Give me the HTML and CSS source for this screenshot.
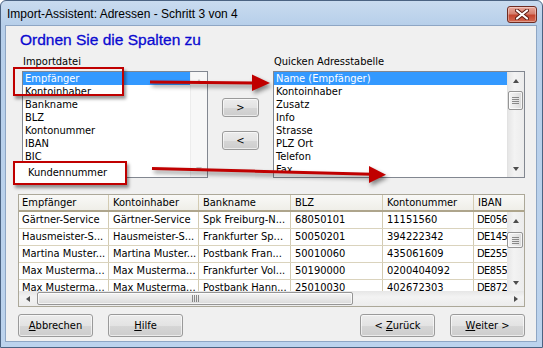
FILE: index.html
```html
<!DOCTYPE html>
<html lang="de">
<head>
<meta charset="utf-8">
<title>Import-Assistent</title>
<link rel="stylesheet" href="styles.css">
</head>
<body>
<div class="window">
  <div class="titlebar">
    <span class="title">Import-Assistent: Adressen - Schritt 3 von 4</span>
    <span class="close">
      <svg width="14" height="11" viewBox="0 0 14 11"><path d="M2 1.5 L12 9.5 M12 1.5 L2 9.5" stroke="#5a1a12" stroke-width="4" stroke-linecap="round"/><path d="M2 1.5 L12 9.5 M12 1.5 L2 9.5" stroke="#ffffff" stroke-width="2.2" stroke-linecap="round"/></svg>
    </span>
  </div>
  <div class="client">
    <h1 class="heading">Ordnen Sie die Spalten zu</h1>
    <div class="mapping">
      <div class="col col-left">
        <div class="label">Importdatei</div>
        <div class="listbox">
          <ul class="items">
            <li class="sel">Empfänger</li>
            <li>Kontoinhaber</li>
            <li>Bankname</li>
            <li>BLZ</li>
            <li>Kontonummer</li>
            <li>IBAN</li>
            <li>BIC</li>
          </ul>
          <div class="vscroll disabled">
            <div class="arrow"><span class="tri up"></span></div>
            <div class="track"></div>
            <div class="arrow"><span class="tri down"></span></div>
          </div>
        </div>
      </div>
      <div class="col col-mid">
        <span class="btn small">&gt;</span>
        <span class="btn small">&lt;</span>
      </div>
      <div class="col col-right">
        <div class="label">Quicken Adresstabelle</div>
        <div class="listbox">
          <ul class="items">
            <li class="sel">Name (Empfänger)</li>
            <li>Kontoinhaber</li>
            <li>Zusatz</li>
            <li>Info</li>
            <li>Strasse</li>
            <li>PLZ Ort</li>
            <li>Telefon</li>
            <li>Fax</li>
          </ul>
          <div class="vscroll">
            <div class="arrow"><span class="tri up"></span></div>
            <div class="track"><div class="thumb thumb-list"><span class="grip-v"></span></div></div>
            <div class="arrow"><span class="tri down"></span></div>
          </div>
        </div>
      </div>
    </div>

    <div class="grid">
      <div class="ghead">
        <div class="cell c1">Empfänger</div>
        <div class="cell c2">Kontoinhaber</div>
        <div class="cell c3">Bankname</div>
        <div class="cell c4">BLZ</div>
        <div class="cell c5">Kontonummer</div>
        <div class="cell c6">IBAN</div>
      </div>
      <div class="gbody">
        <div class="rows">
          <div class="row"><div class="cell c1">Gärtner-Service</div><div class="cell c2">Gärtner-Service</div><div class="cell c3">Spk Freiburg-N...</div><div class="cell c4">68050101</div><div class="cell c5">11151560</div><div class="cell c6">DE056</div></div>
          <div class="row"><div class="cell c1">Hausmeister-S...</div><div class="cell c2">Hausmeister-S...</div><div class="cell c3">Frankfurter Sp...</div><div class="cell c4">50050201</div><div class="cell c5">394222342</div><div class="cell c6">DE145</div></div>
          <div class="row"><div class="cell c1">Martina Muster...</div><div class="cell c2">Martina Muster...</div><div class="cell c3">Postbank Fran...</div><div class="cell c4">50010060</div><div class="cell c5">435061609</div><div class="cell c6">DE255</div></div>
          <div class="row"><div class="cell c1">Max Musterma...</div><div class="cell c2">Max Musterma...</div><div class="cell c3">Frankfurter Vol...</div><div class="cell c4">50190000</div><div class="cell c5">0200404092</div><div class="cell c6">DE855</div></div>
          <div class="row"><div class="cell c1">Max Musterma...</div><div class="cell c2">Max Musterma...</div><div class="cell c3">Postbank Hann...</div><div class="cell c4">25010030</div><div class="cell c5">402672303</div><div class="cell c6">DE872</div></div>
        </div>
        <div class="vscroll">
          <div class="arrow"><span class="tri up"></span></div>
          <div class="track"><div class="thumb thumb-grid"><span class="grip-v"></span></div></div>
          <div class="arrow"><span class="tri down"></span></div>
        </div>
      </div>
      <div class="hscroll">
        <div class="arrow"><span class="tri left"></span></div>
        <div class="track"><div class="thumb thumb-h"><span class="grip-h"></span></div></div>
        <div class="arrow"><span class="tri right"></span></div>
      </div>
    </div>

    <div class="footer">
      <div class="group">
        <span class="btn"><u>A</u>bbrechen</span>
        <span class="btn"><u>H</u>ilfe</span>
      </div>
      <div class="group">
        <span class="btn">&lt; <u>Z</u>urück</span>
        <span class="btn"><u>W</u>eiter &gt;</span>
      </div>
    </div>
  </div>
</div>

<div class="mark mark-top"></div>
<div class="mark mark-bottom">Kundennummer</div>
<svg class="arrows" width="543" height="348" viewBox="0 0 543 348">
  <g fill="#c00000" stroke="#c00000">
    <line x1="150" y1="82" x2="255" y2="83" stroke-width="3"/>
    <polygon points="252,74.5 270,83 252,91" stroke="none"/>
    <line x1="152" y1="168.5" x2="372" y2="174.3" stroke-width="3"/>
    <polygon points="369,166 386,174.8 369,183" stroke="none"/>
  </g>
</svg>
</body>
</html>
```

FILE: styles.css
```css
* { box-sizing: border-box; }
html, body { margin: 0; padding: 0; }
body {
  position: relative;
  width: 543px;
  height: 348px;
  overflow: hidden;
  background: #ffffff;
  font-family: "DejaVu Sans", "Liberation Sans", sans-serif;
  font-stretch: condensed;
  font-size: 11px;
  color: #000;
}

.window {
  width: 543px;
  height: 348px;
  border: 1px solid #4b6382;
  border-radius: 6px 6px 0 0;
  background: linear-gradient(#c9dbef, #b7cfea 24px, #bcd3ed);
  padding: 0 5px 5px 4px;
  display: flex;
  flex-direction: column;
}

.titlebar {
  height: 24px;
  display: flex;
  align-items: center;
  justify-content: space-between;
  padding-left: 2px;
}
.title {
  font-family: "Liberation Sans", sans-serif;
  font-stretch: normal;
  font-size: 12px;
  color: #000;
  margin-top: 2px;
}
.close {
  width: 30px;
  height: 17px;
  margin-top: 2px;
  border: 1px solid #6e2c22;
  border-radius: 3px;
  background: linear-gradient(#e9a99c, #d5806f 45%, #c4452f 55%, #d36a52);
  display: flex;
  align-items: center;
  justify-content: center;
  box-shadow: inset 0 0 0 1px rgba(255,255,255,0.35);
}

.client {
  flex: 1;
  background: #f0f0f0;
  border: 1px solid #8ea6c4;
  padding: 0 11px 0 12px;
  display: flex;
  flex-direction: column;
}

.heading {
  margin: 5px 0 0 2px;
  height: 18px;
  line-height: 18px;
  font-family: "Liberation Sans", sans-serif;
  font-stretch: normal;
  font-size: 15.5px;
  font-weight: normal;
  color: #0a0ad0;
  -webkit-text-stroke: 0.3px #0a0ad0;
}

.mapping {
  display: flex;
  margin: 6px 0 0 4px;
}
.col { display: flex; flex-direction: column; }
.col-left { width: 186px; }
.col-mid { width: 37px; margin: 0 14px; padding-top: 43px; gap: 14px; }
.col-right { width: 252px; }
.label { height: 13px; line-height: 13px; padding-left: 1px; margin-bottom: 3px; }

.listbox {
  height: 107px;
  border: 1px solid #828790;
  background: #fff;
  display: flex;
  overflow: hidden;
}
.items {
  list-style: none;
  margin: 0;
  padding: 0;
  flex: 1;
  overflow: hidden;
}
.items li {
  height: 13px;
  line-height: 13px;
  padding-left: 2px;
  white-space: nowrap;
}
.items li.sel { background: #3399ff; color: #fff; }

.vscroll {
  width: 17px;
  display: flex;
  flex-direction: column;
  background: linear-gradient(90deg, #e6e6e6, #f3f3f3 40%, #ececec);
  border-left: 1px solid #e2e2e2;
}
.vscroll .arrow { height: 17px; }
.vscroll .track { flex: 1; }
.arrow {
  display: flex;
  align-items: center;
  justify-content: center;
  flex: none;
}
.tri { width: 0; height: 0; display: block; }
.tri.up { border-left: 3.5px solid transparent; border-right: 3.5px solid transparent; border-bottom: 4px solid #4d4d4d; }
.tri.down { border-left: 3.5px solid transparent; border-right: 3.5px solid transparent; border-top: 4px solid #4d4d4d; }
.tri.left { border-top: 3.5px solid transparent; border-bottom: 3.5px solid transparent; border-right: 4px solid #4d4d4d; }
.tri.right { border-top: 3.5px solid transparent; border-bottom: 3.5px solid transparent; border-left: 4px solid #4d4d4d; }
.disabled { background: #f7f7f7; border-left: 1px solid #ececec; }
.disabled .tri.up { border-bottom-color: #c4c4c4; }
.disabled .tri.down { border-top-color: #c4c4c4; }

.thumb {
  border: 1px solid #959595;
  border-radius: 2px;
  background: linear-gradient(90deg, #f4f4f4, #e8e8e8 50%, #d9d9d9);
  box-shadow: inset 0 0 0 1px rgba(255,255,255,0.7);
  display: flex;
  align-items: center;
  justify-content: center;
}
.thumb-list { height: 19px; margin: 2px 1px 0 0; }
.thumb-grid { height: 16px; margin: 3px 1px 0 0; }
.grip-v {
  width: 7px;
  height: 7px;
  background: repeating-linear-gradient(#555 0 1px, transparent 1px 2px);
  opacity: 0.65;
}
.grip-h {
  width: 7px;
  height: 7px;
  background: repeating-linear-gradient(90deg, #555 0 1px, transparent 1px 2px);
  opacity: 0.65;
}

.grid {
  margin-top: 16px;
  border: 1px solid #aca899;
  background: #fff;
  display: flex;
  flex-direction: column;
}
.ghead {
  display: flex;
  height: 17px;
  background: linear-gradient(#f9f9f7, #efeee8);
  border-bottom: 2px solid #aea58c;
}
.cell {
  flex: none;
  padding-left: 3px;
  white-space: nowrap;
  overflow: hidden;
  line-height: 15px;
  border-right: 1px solid #d3cbb2;
}
.c1 { width: 90px; }
.c2 { width: 90px; padding-left: 4px; }
.c3 { width: 92px; padding-left: 4px; }
.c4 { width: 92px; padding-left: 4px; }
.c5 { width: 91px; padding-left: 4px; }
.c6 { flex: 1; padding-left: 4px; border-right: none; }

.gbody { display: flex; height: 79px; }
.rows { width: 488px; overflow: hidden; }
.row {
  display: flex;
  height: 17px;
  border-bottom: 1px solid #dad3bd;
}
.row .cell { line-height: 16px; }
.rows .c6 { width: 33px; flex: none; padding-left: 3px; letter-spacing: -0.5px; }
.gbody .vscroll { border-left: none; }

.hscroll {
  height: 15px;
  display: flex;
  background: linear-gradient(#e6e6e6, #f3f3f3 40%, #ececec);
}
.hscroll .arrow { width: 17px; }
.hscroll .track { flex: 1; }
.thumb-h {
  width: 316px;
  height: 13px;
  margin: 1px 0 0 1px;
  background: linear-gradient(#f4f4f4, #e8e8e8 50%, #d9d9d9);
}

.footer {
  margin-top: 7px;
  display: flex;
  justify-content: space-between;
}
.group { display: flex; gap: 15px; }

.btn {
  display: flex;
  align-items: center;
  justify-content: center;
  width: 75px;
  height: 23px;
  border: 1px solid #9a9a9a;
  border-radius: 3px;
  background: linear-gradient(#ececec, #e3e3e3 50%, #d6d6d6 51%, #cdcdcd);
  box-shadow: inset 0 0 0 1px rgba(255,255,255,0.6);
  color: #000;
  white-space: pre;
}
.btn.small { width: 37px; height: 19px; }
.btn u { text-decoration: underline; text-underline-offset: 1px; }

.mark {
  position: absolute;
  border: 2px solid #c00000;
  box-shadow: 2px 3px 3px rgba(0,0,0,0.4);
}
.mark-top { left: 13px; top: 67px; width: 111px; height: 29px; }
.mark-bottom {
  left: 13px;
  top: 161px;
  width: 114px;
  height: 24px;
  background: #fff;
  padding-left: 13px;
  line-height: 20px;
}
.arrows {
  position: absolute;
  left: 0;
  top: 0;
  filter: drop-shadow(2px 3px 2px rgba(0,0,0,0.45));
}
```
